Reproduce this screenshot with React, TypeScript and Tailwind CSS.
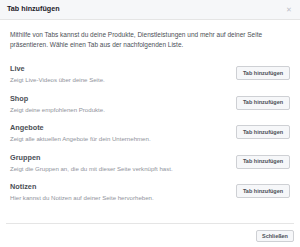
import React from "react";

const tabs = [
  { title: "Live", desc: "Zeigt Live-Videos über deine Seite." },
  { title: "Shop", desc: "Zeigt deine empfohlenen Produkte." },
  { title: "Angebote", desc: "Zeigt alle aktuellen Angebote für dein Unternehmen." },
  { title: "Gruppen", desc: "Zeigt die Gruppen an, die du mit dieser Seite verknüpft hast." },
  { title: "Notizen", desc: "Hier kannst du Notizen auf deiner Seite hervorheben." },
];

const App: React.FC = () => {
  return (
    <div className="w-[300px] h-[247px] bg-white font-['Liberation_Sans',Arial,sans-serif] text-[#1d2129] overflow-hidden">
      {/* Header */}
      <div className="h-[20px] bg-[#f6f7f9] border-b border-[#e5e5e5] flex items-center justify-between pl-[7px] pr-[8px]">
        <span className="text-[7.2px] font-bold">Tab hinzufügen</span>
        <span className="text-[7px] text-[#bec2c9] leading-none">✕</span>
      </div>

      {/* Body */}
      <div className="px-[10px] pt-[10px]">
        <p className="text-[6.5px] leading-[9.5px] text-[#4b4f56]">
          Mithilfe von Tabs kannst du deine Produkte, Dienstleistungen und mehr auf deiner Seite präsentieren. Wähle einen Tab aus der nachfolgenden Liste.
        </p>

        <div className="mt-[15px] flex flex-col">
          {tabs.map((tab) => (
            <div key={tab.title} className="h-[29.5px] flex items-start justify-between">
              <div className="flex flex-col">
                <span className="text-[7.3px] font-bold leading-[9px] text-[#4b4f56]">{tab.title}</span>
                <span className="mt-[3px] text-[6.1px] leading-[7px] text-[#90949c]">{tab.desc}</span>
              </div>
              <button className="mt-[2px] w-[54px] h-[14px] bg-[#f6f7f9] border border-[#ced0d4] rounded-[2px] text-[5.5px] font-bold text-[#4b4f56] flex items-center justify-center">
                Tab hinzufügen
              </button>
            </div>
          ))}
        </div>
      </div>

      {/* Footer */}
      <div className="mx-[6px] mt-[11.5px] border-t border-[#e5e5e5] pt-[6px] flex justify-end">
        <button className="w-[38px] h-[12px] bg-[#f6f7f9] border border-[#ced0d4] rounded-[2px] text-[5.5px] font-bold text-[#4b4f56] flex items-center justify-center">
          Schließen
        </button>
      </div>
    </div>
  );
};

export default App;
